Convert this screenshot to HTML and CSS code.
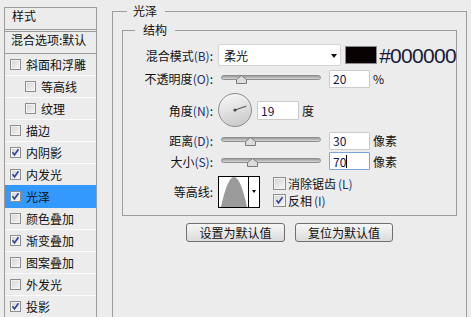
FILE: index.html
```html
<!DOCTYPE html>
<html lang="zh-CN">
<head>
    <meta charset="UTF-8">
    <meta name="viewport" content="width=device-width, initial-scale=1.0">
    <title>图层样式 - 光泽</title>
    <link rel="stylesheet" href="styles.css">
</head>
<body>
    <div class="page">
        <div class="styles-list">
            <div class="list-head">样式</div>
            <div class="list-blend">混合选项:默认</div>
            <div class="item"><span class="cb"></span>斜面和浮雕</div>
            <div class="item sub"><span class="cb"></span>等高线</div>
            <div class="item sub"><span class="cb"></span>纹理</div>
            <div class="item"><span class="cb"></span>描边</div>
            <div class="item"><span class="cb"><svg viewBox="0 0 9 9"><path d="M1.5 4.2l2 2.6 4-5.6"/></svg></span>内阴影</div>
            <div class="item"><span class="cb"><svg viewBox="0 0 9 9"><path d="M1.5 4.2l2 2.6 4-5.6"/></svg></span>内发光</div>
            <div class="item active"><span class="cb"><svg viewBox="0 0 9 9"><path d="M1.5 4.2l2 2.6 4-5.6"/></svg></span>光泽</div>
            <div class="item"><span class="cb"></span>颜色叠加</div>
            <div class="item"><span class="cb"><svg viewBox="0 0 9 9"><path d="M1.5 4.2l2 2.6 4-5.6"/></svg></span>渐变叠加</div>
            <div class="item"><span class="cb"></span>图案叠加</div>
            <div class="item"><span class="cb"></span>外发光</div>
            <div class="item"><span class="cb"><svg viewBox="0 0 9 9"><path d="M1.5 4.2l2 2.6 4-5.6"/></svg></span>投影</div>
        </div>

        <fieldset class="group outer">
            <legend>光泽</legend>
            <fieldset class="group inner">
                <legend>结构</legend>
                <div class="form">
                    <label>混合模式<span class="key">(B)</span>:</label>
                    <div class="ctl">
                        <div class="select">柔光<span class="arrow"></span></div>
                        <span class="swatch"></span>
                        <span class="hex">#000000</span>
                    </div>

                    <label>不透明度<span class="key">(O)</span>:</label>
                    <div class="ctl">
                        <div class="slider">
                            <div class="track"></div>
                            <svg class="thumb" style="left: 18px" viewBox="0 0 11 9"><path d="M5.5 0.5L10.5 4.5V8.5H0.5V4.5Z"/></svg>
                        </div>
                        <span class="num">20</span>
                        <span class="unit">%</span>
                    </div>

                    <label>角度<span class="key">(N)</span>:</label>
                    <div class="ctl">
                        <svg class="dial" width="34" height="34" viewBox="0 0 34 34">
                            <defs>
                                <linearGradient id="dialFill" x1="0" y1="0" x2="0.3" y2="1">
                                    <stop offset="0" stop-color="#fbfbfb"/>
                                    <stop offset="1" stop-color="#cdcdcd"/>
                                </linearGradient>
                            </defs>
                            <circle cx="17" cy="17" r="16.5" fill="url(#dialFill)" stroke="#8c8c8c"/>
                            <line x1="17" y1="17" x2="28.4" y2="13.1" stroke="#4a4a4a" stroke-width="1"/>
                            <circle cx="17" cy="17" r="1.6" fill="#4a4a4a"/>
                        </svg>
                        <span class="num angle">19</span>
                        <span class="unit">度</span>
                    </div>

                    <label>距离<span class="key">(D)</span>:</label>
                    <div class="ctl">
                        <div class="slider">
                            <div class="track"></div>
                            <svg class="thumb" style="left: 27px" viewBox="0 0 11 9"><path d="M5.5 0.5L10.5 4.5V8.5H0.5V4.5Z"/></svg>
                        </div>
                        <span class="num">30</span>
                        <span class="unit">像素</span>
                    </div>

                    <label>大小<span class="key">(S)</span>:</label>
                    <div class="ctl">
                        <div class="slider">
                            <div class="track"></div>
                            <svg class="thumb" style="left: 29px" viewBox="0 0 11 9"><path d="M5.5 0.5L10.5 4.5V8.5H0.5V4.5Z"/></svg>
                        </div>
                        <span class="num focus">70<span class="caret"></span></span>
                        <span class="unit">像素</span>
                    </div>

                    <label>等高线:</label>
                    <div class="ctl">
                        <div class="contour">
                            <svg class="curve" width="29" height="30" viewBox="0 0 29 30"><path d="M2 30Q15 -30 28 30Z"/></svg>
                            <span class="drop"></span>
                        </div>
                        <div class="options">
                            <div class="opt"><span class="cb big"></span>消除锯齿<span class="key">(L)</span></div>
                            <div class="opt"><span class="cb big"><svg viewBox="0 0 9 9"><path d="M1.5 4.2l2 2.6 4-5.6"/></svg></span>反相<span class="key">(I)</span></div>
                        </div>
                    </div>
                </div>
            </fieldset>

            <div class="buttons">
                <button type="button" class="btn">设置为默认值</button>
                <button type="button" class="btn narrow">复位为默认值</button>
            </div>
        </fieldset>
    </div>
</body>
</html>
```

FILE: styles.css
```css
* {
    box-sizing: border-box;
}

html,
body {
    margin: 0;
    overflow: hidden;
}

body {
    background-color: #ececec;
    font-family: "Noto Sans CJK SC", "Noto Sans", sans-serif;
    font-size: 12px;
    color: #111;
}

.page {
    display: flex;
    align-items: flex-start;
}

/* left list of layer styles */
.styles-list {
    width: 93px;
    height: 310px;
    margin: 7px 0 0 4px;
    border: 1px solid #9c9c9c;
    border-bottom: none;
}

.list-head {
    height: 24px;
    line-height: 16px;
    padding-left: 7px;
    border-bottom: 3px double #9c9c9c;
}

.list-blend {
    height: 22px;
    line-height: 16px;
    padding-left: 6px;
    border-bottom: 1px solid #9c9c9c;
}

.item {
    display: flex;
    align-items: center;
    gap: 5px;
    height: 22px;
    padding-left: 5px;
    border-bottom: 1px solid #fbfbfb;
}

.item:last-child {
    height: 21px;
    border-bottom: none;
}

.item.sub {
    padding-left: 20px;
}

.item.active {
    background-color: #3399ff;
    border-bottom-color: #3399ff;
    box-shadow: 0 -1px 0 #3399ff;
}

.cb {
    display: flex;
    align-items: center;
    justify-content: center;
    width: 11px;
    height: 11px;
    flex: none;
    border: 1px solid #8e8e8e;
    background: linear-gradient(135deg, #d4d4d4, #f6f6f6);
    box-shadow: inset 0 0 0 1px #f2f2f2;
}

.cb svg {
    width: 9px;
    height: 9px;
}

.cb svg path {
    fill: none;
    stroke: #33449a;
    stroke-width: 1.6;
}

.cb.big {
    width: 13px;
    height: 13px;
}

/* group boxes */
.group {
    margin: 0;
    padding: 0;
    min-width: 0;
    border: 1px solid #9c9c9c;
}

.group > legend {
    line-height: 16px;
}

.outer {
    width: 355px;
    height: 314px;
    margin: 3px 0 0 15px;
    padding: 3px 9px 0 9px;
    border-bottom: none;
}

.outer > legend {
    margin-left: 5px;
    padding: 0 8px 0 6px;
}

.inner {
    padding: 6px 0 2px;
}

.inner > legend {
    margin-left: 12px;
    padding: 0 8px;
}

.form {
    display: grid;
    grid-template-columns: 90px minmax(0, 1fr);
    grid-template-rows: 22px 25px 38px 23px 18px 43px;
    column-gap: 5px;
    align-items: center;
}

.form > label {
    text-align: right;
    white-space: nowrap;
}

.key {
    color: #1c2f72;
}

.ctl {
    display: flex;
    align-items: center;
    white-space: nowrap;
}

.select {
    display: flex;
    align-items: center;
    justify-content: space-between;
    width: 132px;
    height: 22px;
    padding: 0 3px 0 5px;
    background-color: #fff;
    border: 1px solid #d4d4d4;
    border-radius: 2px;
}

.arrow {
    width: 0;
    height: 0;
    border-left: 3.5px solid transparent;
    border-right: 3.5px solid transparent;
    border-top: 4px solid #111;
    margin-top: 2px;
}

.swatch {
    width: 35px;
    height: 18px;
    margin-left: 4px;
    background-color: #080202;
    border: 1px solid #8a8a8a;
}

.hex {
    margin-left: 2px;
    font-family: "Liberation Sans", Arial, sans-serif;
    font-size: 21px;
    letter-spacing: -0.7px;
    line-height: 1;
    color: #171a3a;
}

.slider {
    position: relative;
    width: 105px;
    height: 9px;
    margin-top: 2px;
}

.track {
    height: 5px;
    margin: 0 2px 0 3px;
    border: 1px solid #8e8e8e;
    border-radius: 3px;
    background: linear-gradient(#9a9a9a, #d6d6d6);
}

.thumb {
    position: absolute;
    top: 0;
    width: 11px;
    height: 9px;
}

.thumb path {
    fill: #dcdcdc;
    stroke: #7a7a7a;
    stroke-width: 1;
}

.num {
    display: flex;
    align-items: center;
    width: 41px;
    height: 18px;
    margin-left: 6px;
    padding-left: 3px;
    background-color: #fff;
    border: 1px solid #cbcbcb;
    border-radius: 1px;
    color: #14164a;
}

.num.angle {
    width: 42px;
    height: 19px;
    margin-left: 5px;
}

.num.focus {
    border-color: #7aa6d8;
}

.caret {
    width: 1px;
    height: 13px;
    background-color: #000;
}

.unit {
    margin-left: 3px;
}

.contour {
    display: flex;
    width: 42px;
    height: 32px;
    background-color: #fff;
    border: 1px solid #000;
}

.curve {
    flex: none;
}

.curve path {
    fill: #9b9b9b;
}

.drop {
    flex: 1;
    display: flex;
    align-items: center;
    justify-content: center;
    border-left: 1px solid #000;
}

.drop::after {
    content: "";
    border-left: 2.5px solid transparent;
    border-right: 2.5px solid transparent;
    border-top: 3px solid #000;
}

.options {
    margin-left: 13px;
}

.opt {
    display: flex;
    align-items: center;
    gap: 2px;
    height: 17px;
}

.buttons {
    display: flex;
    justify-content: center;
    gap: 10px;
    margin-top: 7px;
}

.btn {
    width: 99px;
    height: 19px;
    padding: 0;
    font: inherit;
    line-height: 16px;
    color: #111;
    background: linear-gradient(#f6f6f6, #dcdcdc);
    border: 1px solid #707070;
    border-radius: 3px;
}

.btn.narrow {
    width: 98px;
}
```
